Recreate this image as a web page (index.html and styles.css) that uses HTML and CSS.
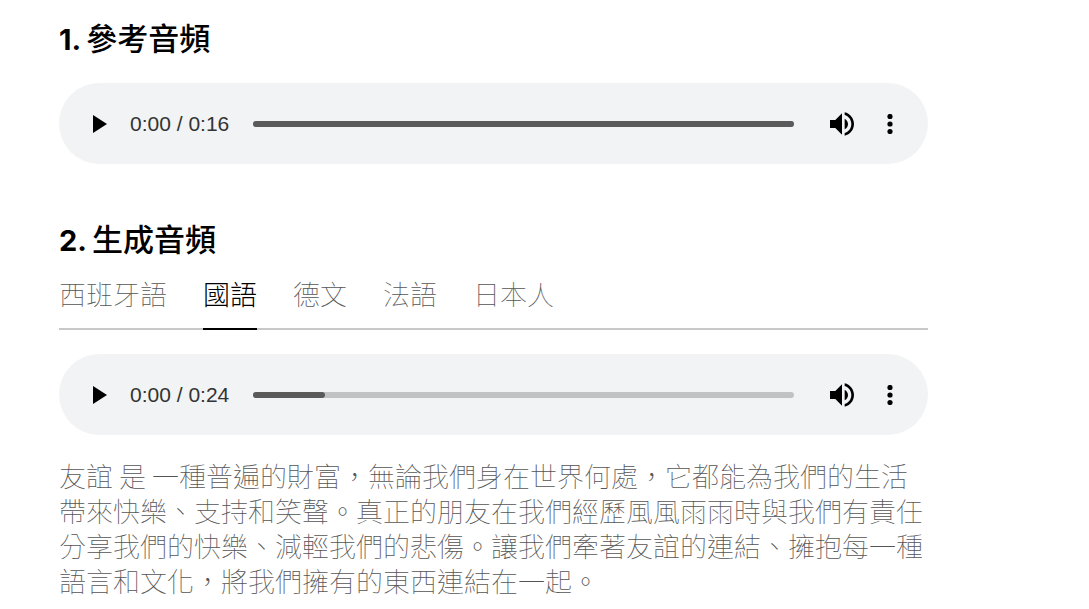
FILE: index.html
```
<!DOCTYPE html>
<html lang="zh-Hant">
<head>
<meta charset="utf-8">
<meta name="viewport" content="width=device-width, initial-scale=1">
<title>音頻</title>
<link rel="stylesheet" href="styles.css">
</head>
<body>
<main class="page">
  <section class="sample">
    <h2 class="title"><span class="number">1.</span> 參考音頻</h2>
    <div class="player">
      <button class="control play" type="button" aria-label="播放"><svg viewBox="0 0 14 18" width="14" height="18"><path d="M0 0v18l14-9z"/></svg></button>
      <span class="time">0:00 / 0:16</span>
      <div class="track">
        <div class="buffered" style="width: 100%"></div>
        <input class="seek" type="range" min="0" max="16" value="0" aria-label="播放進度">
      </div>
      <button class="control volume" type="button" aria-label="音量"><svg viewBox="3 3 18 18" width="24" height="24"><path d="M3 9v6h4l5 5V4L7 9H3zm13.500 3c0-1.770-1.020-3.290-2.500-4.030v8.050c1.480-.730 2.500-2.250 2.500-4.020zM14 3.230v2.060c2.890.860 5 3.540 5 6.710s-2.110 5.850-5 6.710v2.060c4.010-.910 7-4.490 7-8.770s-2.990-7.860-7-8.770z"/></svg></button>
      <button class="control more" type="button" aria-label="更多選項"><svg viewBox="0 0 6 20" width="6" height="20"><circle cx="3" cy="2.500" r="2.600"/><circle cx="3" cy="10" r="2.600"/><circle cx="3" cy="17.500" r="2.600"/></svg></button>
    </div>
  </section>

  <section class="sample">
    <h2 class="title"><span class="number">2.</span> 生成音頻</h2>
    <div class="tabs" role="tablist">
      <button class="tab" type="button" role="tab" aria-selected="false">西班牙語</button>
      <button class="tab active" type="button" role="tab" aria-selected="true">國語</button>
      <button class="tab" type="button" role="tab" aria-selected="false">德文</button>
      <button class="tab" type="button" role="tab" aria-selected="false">法語</button>
      <button class="tab" type="button" role="tab" aria-selected="false">日本人</button>
    </div>
    <div class="player">
      <button class="control play" type="button" aria-label="播放"><svg viewBox="0 0 14 18" width="14" height="18"><path d="M0 0v18l14-9z"/></svg></button>
      <span class="time">0:00 / 0:24</span>
      <div class="track">
        <div class="buffered" style="width: 13.300%"></div>
        <input class="seek" type="range" min="0" max="24" value="0" aria-label="播放進度">
      </div>
      <button class="control volume" type="button" aria-label="音量"><svg viewBox="3 3 18 18" width="24" height="24"><path d="M3 9v6h4l5 5V4L7 9H3zm13.500 3c0-1.770-1.020-3.290-2.500-4.030v8.050c1.480-.730 2.500-2.250 2.500-4.020zM14 3.230v2.060c2.890.860 5 3.540 5 6.710s-2.110 5.850-5 6.710v2.060c4.010-.910 7-4.490 7-8.770s-2.990-7.860-7-8.770z"/></svg></button>
      <button class="control more" type="button" aria-label="更多選項"><svg viewBox="0 0 6 20" width="6" height="20"><circle cx="3" cy="2.500" r="2.600"/><circle cx="3" cy="10" r="2.600"/><circle cx="3" cy="17.500" r="2.600"/></svg></button>
    </div>
    <p class="transcript">友誼 是 一種普遍的財富，無論我們身在世界何處，它都能為我們的生活帶來快樂、支持和笑聲。真正的朋友在我們經歷風風雨雨時與我們有責任分享我們的快樂、減輕我們的悲傷。讓我們牽著友誼的連結、擁抱每一種語言和文化，將我們擁有的東西連結在一起。</p>
  </section>
</main>
</body>
</html>
```
FILE: styles.css
```
* {
  box-sizing: border-box;
}

body {
  margin: 0;
  background: #fff;
  color: #000;
  font-family: "Liberation Sans", "Noto Sans CJK TC", sans-serif;
}

button {
  padding: 0;
  border: 0;
  background: none;
  color: inherit;
  font: inherit;
  cursor: pointer;
}

.page {
  display: flex;
  flex-direction: column;
  gap: 54px;
  padding: 17px 161px 0 59px;
}

.title {
  display: flex;
  align-items: baseline;
  gap: 5px;
  margin: 0;
  font-family: "Noto Sans CJK TC", sans-serif;
  font-size: 31px;
  line-height: 40px;
  font-weight: 500;
}

.number {
  font-family: Inter, sans-serif;
  font-size: 29px;
  font-weight: 700;
  line-height: 32px;
}

.title + .player {
  margin-top: 26px;
}

.player {
  display: flex;
  align-items: center;
  height: 81px;
  padding: 0 35px 0 34px;
  border-radius: 41px;
  background: #f1f3f4;
}

.control {
  display: flex;
  flex: none;
}

.time {
  flex: none;
  margin: 0 24px 0 23px;
  color: #333;
  font-size: 21px;
  line-height: 24px;
}

.track {
  display: grid;
  flex: 1;
  height: 6px;
  border-radius: 3px;
  background: #c1c2c3;
}

.buffered,
.seek {
  grid-area: 1 / 1;
  height: 6px;
}

.buffered {
  border-radius: 3px;
  background: #5a5a5a;
}

.seek {
  width: 100%;
  margin: 0;
  appearance: none;
  background: transparent;
  cursor: pointer;
}

.seek::-webkit-slider-thumb {
  appearance: none;
  width: 6px;
  height: 6px;
  background: transparent;
}

.volume {
  margin: 0 33px 0 36px;
}

.tabs {
  display: flex;
  gap: 36px;
  margin: 18px 0 24px;
  box-shadow: inset 0 -2px #c8c8c8;
}

.tab {
  padding-bottom: 12px;
  border-bottom: 2px solid transparent;
  color: #555;
  font-size: 27px;
  font-weight: 100;
  line-height: 40px;
}

.active {
  border-color: #000;
  color: #000;
  font-weight: 300;
}

.transcript {
  margin: 23px 0 0;
  color: #555;
  font-family: "Noto Sans CJK TC", sans-serif;
  font-size: 27px;
  font-weight: 100;
  line-height: 35px;
}
```
